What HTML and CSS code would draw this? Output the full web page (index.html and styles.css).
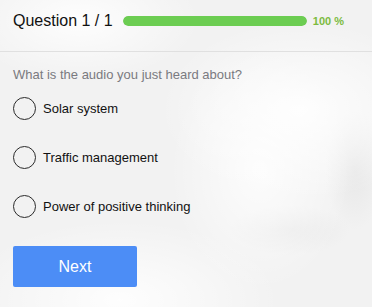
FILE: index.html
```html
<!DOCTYPE html>
<html lang="en">
<head>
    <meta charset="UTF-8">
    <title>Quiz</title>
    <link rel="stylesheet" href="styles.css">
</head>
<body>
    <div class="quiz">
        <div class="quiz-header">
            <span class="quiz-title">Question 1 / 1</span>
            <div class="progress">
                <div class="progress-fill" style="width: 100%"></div>
            </div>
            <span class="progress-label">100 %</span>
        </div>

        <div class="quiz-body">
            <p class="question">What is the audio you just heard about?</p>

            <div class="options">
                <label class="option">
                    <input type="radio" name="answer" value="solar">
                    <span>Solar system</span>
                </label>
                <label class="option">
                    <input type="radio" name="answer" value="traffic">
                    <span>Traffic management</span>
                </label>
                <label class="option">
                    <input type="radio" name="answer" value="power">
                    <span>Power of positive thinking</span>
                </label>
            </div>

            <button class="next-btn">Next</button>
        </div>
    </div>
</body>
</html>
```

FILE: styles.css
```css
html, body {
    margin: 0;
    height: 100%;
}
body {
    font-family: "Liberation Sans", Arial, sans-serif;
    color: #111;
    background-color: #f2f2f2;
    background-image:
        radial-gradient(ellipse 120px 60px at 80px 20px, rgba(255, 255, 255, 0.9), rgba(255, 255, 255, 0)),
        radial-gradient(ellipse 140px 90px at 300px 110px, rgba(255, 255, 255, 0.9), rgba(255, 255, 255, 0)),
        radial-gradient(ellipse 90px 120px at 260px 170px, rgba(255, 255, 255, 0.8), rgba(255, 255, 255, 0)),
        radial-gradient(ellipse 30px 60px at 355px 170px, rgba(215, 215, 215, 0.4), rgba(215, 215, 215, 0)),
        radial-gradient(ellipse 60px 25px at 290px 230px, rgba(220, 220, 220, 0.4), rgba(220, 220, 220, 0)),
        radial-gradient(ellipse 160px 80px at 120px 300px, rgba(255, 255, 255, 0.9), rgba(255, 255, 255, 0));
}
.quiz-header {
    display: flex;
    align-items: center;
    height: 41px;
    padding: 0 28px 10px 13px;
    border-bottom: 1px solid #e0e0e0;
}
.quiz-title {
    font-size: 16px;
    color: #111;
    margin-right: 10px;
    white-space: nowrap;
}
.progress {
    flex: 1;
    height: 10px;
    border-radius: 5px;
    background: #e4e4e4;
    overflow: hidden;
}
.progress-fill {
    height: 100%;
    background: #6ccd52;
    border-radius: 5px;
}
.progress-label {
    margin-left: 6px;
    font-size: 11px;
    font-weight: bold;
    color: #7cbb3e;
    white-space: nowrap;
}
.quiz-body {
    padding: 15px 13px 0;
}
.question {
    margin: 0;
    font-size: 13px;
    color: #7a7a80;
}
.options {
    display: flex;
    flex-direction: column;
    gap: 26px;
    margin-top: 15px;
}
.option {
    display: flex;
    align-items: center;
    gap: 7px;
    font-size: 13px;
    color: #111;
    cursor: pointer;
}
.option input {
    appearance: none;
    -webkit-appearance: none;
    box-sizing: border-box;
    width: 23px;
    height: 23px;
    margin: 0;
    border: 1.5px solid #2a2a2a;
    border-radius: 50%;
    background: transparent;
    cursor: pointer;
}
.option input:checked {
    background: radial-gradient(circle, #2a2a2a 0 5px, transparent 6px);
}
.next-btn {
    display: block;
    width: 124px;
    height: 41px;
    margin-top: 28px;
    font-family: inherit;
    font-size: 16px;
    color: #fff;
    background: #4c8df6;
    border: none;
    border-radius: 2px;
    cursor: pointer;
}
.next-btn:hover {
    background: #3b7de8;
}
```
